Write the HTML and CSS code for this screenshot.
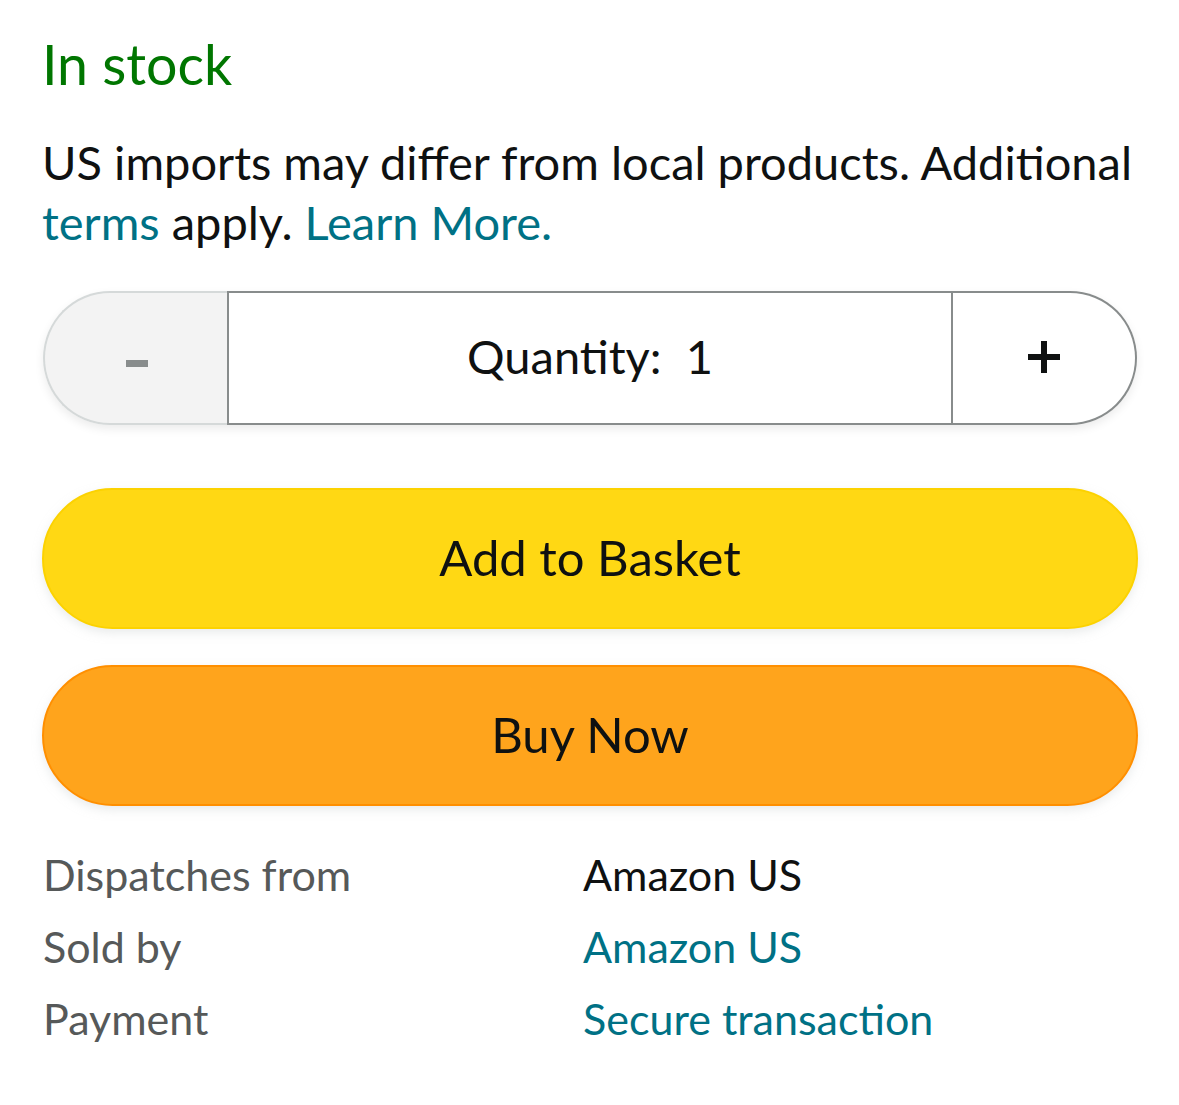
FILE: index.html
```html
<!DOCTYPE html>
<html>
<head>
<meta charset="utf-8">
<link rel="stylesheet" href="styles.css">
</head>
<body>
<div class="page">
  <div class="stock">In stock</div>
  <p class="note">US imports may differ from local products. Additional<br><a class="link">terms</a> apply. <a class="link">Learn More.</a></p>
  <div class="stepper">
    <div class="step minus"><span class="minus-bar"></span></div>
    <div class="qty">Quantity:&nbsp; 1</div>
    <div class="step plus">
      <svg width="34" height="34" viewBox="0 0 34 34"><path d="M17 1V33M1 17H33" stroke="#0f1111" stroke-width="6"/></svg>
    </div>
  </div>
  <button class="btn basket">Add to Basket</button>
  <button class="btn buy">Buy Now</button>
  <div class="info">
    <div class="label">Dispatches from</div><div class="value">Amazon US</div>
    <div class="label">Sold by</div><div class="value link">Amazon US</div>
    <div class="label">Payment</div><div class="value link">Secure transaction</div>
  </div>
</div>
</body>
</html>
```
FILE: styles.css
```css
* { box-sizing: border-box; }
html, body { margin: 0; padding: 0; background: #fff; }
body { font-family: Lato, "Noto Sans", sans-serif; color: #0f1111; }
.page { padding: 28px 42px 0 42px; width: 1179px; }
.stock { color: #007600; font-size: 55.5px; line-height: 72px; }
.note { margin: 32px 0 0 0; font-size: 47px; line-height: 60px; white-space: nowrap; }
.link { color: #007185; text-decoration: none; }
.stepper { display: flex; height: 134px; margin-top: 39px; margin-left: 1px; width: 1094px; border-radius: 67px; box-shadow: 0 4px 10px rgba(0,0,0,0.08); }
.step { width: 184px; display: flex; align-items: center; justify-content: center; }
.minus { background: #f3f3f3; border: 2px solid #d5d9d9; border-right: none; border-radius: 67px 0 0 67px; }
.minus-bar { width: 22px; height: 7px; background: #888c8c; margin-top: 10px; margin-left: 2px; }
.qty { flex: 1; border: 2px solid #888c8c; display: flex; align-items: center; justify-content: center; font-size: 47px; background: #fff; padding-bottom: 4px; }
.plus { background: #fff; border: 2px solid #888c8c; border-left: none; border-radius: 0 67px 67px 0; padding-bottom: 2px; }
.btn { display: block; width: 1096px; height: 141px; border-radius: 71px; font-family: inherit; font-size: 49px; color: #0f1111; cursor: pointer; box-shadow: 0 4px 10px rgba(213,217,217,0.5); padding-bottom: 4px; }
.basket { margin-top: 63px; background: #ffd814; border: 2px solid #fcd200; }
.buy { margin-top: 36px; background: #ffa41c; border: 2px solid #ff8f00; }
.info { display: grid; grid-template-columns: 540px 1fr; margin-top: 33px; margin-left: 1px; font-size: 43px; line-height: 72px; }
.label { color: #565959; }
.value { color: #0f1111; }
.value.link { color: #007185; }
```
